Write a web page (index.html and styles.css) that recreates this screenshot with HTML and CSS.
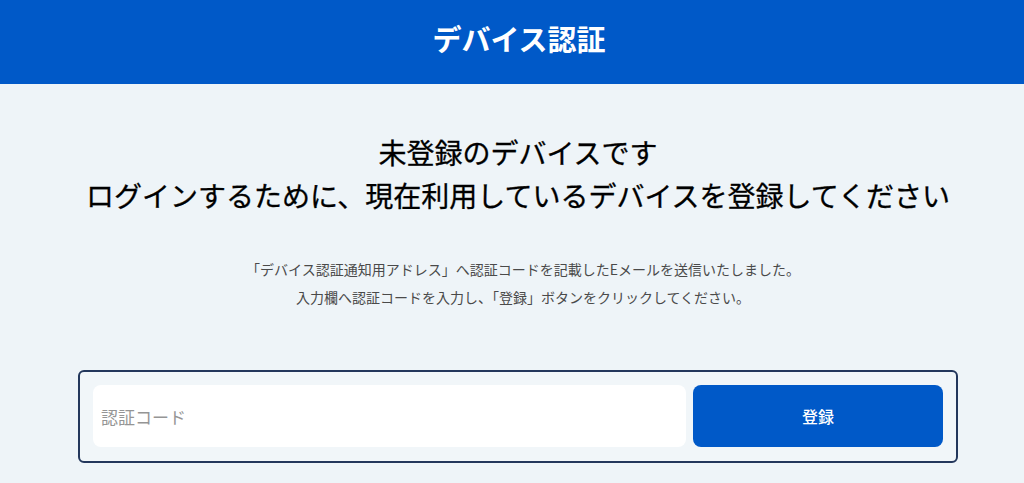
FILE: index.html
```html
<!DOCTYPE html>
<html lang="ja">
<head>
<meta charset="utf-8">
<title>デバイス認証</title>
<link rel="stylesheet" href="styles.css">
</head>
<body>
<header class="topbar">
  <h1 class="topbar-title">デバイス認証</h1>
</header>
<main class="main">
  <h2 class="lead">未登録のデバイスです<br>ログインするために、現在利用しているデバイスを登録してください</h2>
  <p class="note">「デバイス認証通知用アドレス」へ認証コードを記載したEメールを送信いたしました。<br>入力欄へ認証コードを入力し、「登録」ボタンをクリックしてください。</p>
  <form class="code-form">
    <input class="code-input" type="text" placeholder="認証コード">
    <button class="code-button" type="button">登録</button>
  </form>
</main>
</body>
</html>
```
FILE: styles.css
```css
html, body {
  margin: 0;
  padding: 0;
}
body {
  background: #eef4f8;
  font-family: "Noto Sans CJK JP", "Noto Sans", sans-serif;
  color: #1a1a1a;
  padding-left: 12px;
}
.topbar {
  background: #0059c8;
  height: 84px;
  display: flex;
  align-items: center;
  justify-content: center;
  margin-left: -12px;
  padding-left: 14px;
}
.topbar-title {
  margin: 0;
  color: #ffffff;
  font-size: 29px;
  font-weight: 700;
  line-height: 1;
  padding-bottom: 8px;
}
.main {
  display: flex;
  flex-direction: column;
  align-items: center;
}
.lead {
  margin: 47px 0 0;
  font-size: 28px;
  font-weight: 400;
  line-height: 43px;
  text-align: center;
  color: #000;
  -webkit-text-stroke: 0.3px #000;
}
.note {
  margin: 38px 0 0;
  font-size: 14px;
  line-height: 28px;
  text-align: center;
  color: #4a4a4a;
  padding-left: 10px;
}
.code-form {
  margin-top: 59px;
  width: 880px;
  box-sizing: border-box;
  border: 2px solid #23375c;
  border-radius: 6px;
  padding: 13px 13px 14px;
  display: flex;
  gap: 7px;
  background: #f1f6f9;
}
.code-input {
  flex: 1;
  height: 62px;
  box-sizing: border-box;
  border: none;
  border-radius: 8px;
  background: #ffffff;
  padding: 0 8px;
  font-family: inherit;
  font-size: 17px;
  color: #333;
  outline: none;
}
.code-input::placeholder {
  color: #959595;
}
.code-button {
  width: 250px;
  height: 62px;
  border: none;
  border-radius: 8px;
  background: #0059c8;
  color: #ffffff;
  font-family: inherit;
  font-size: 16px;
  font-weight: 500;
}
```
